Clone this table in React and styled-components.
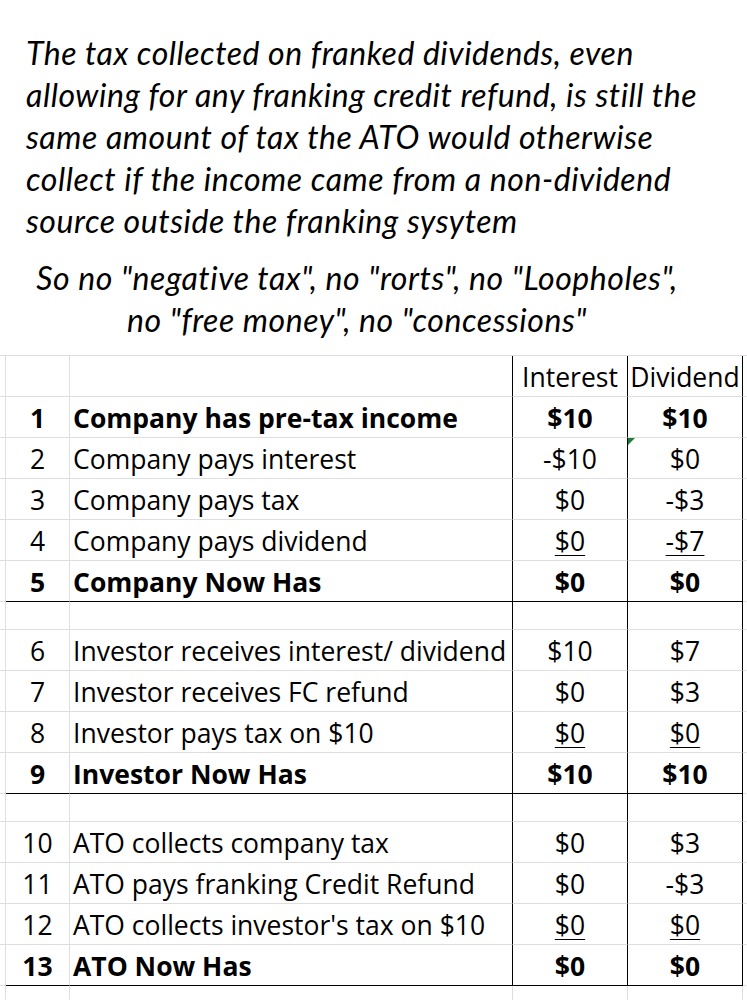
import styled, { createGlobalStyle, css } from "styled-components";

const GlobalStyle = createGlobalStyle`
  body {
    margin: 0;
    background: #fff;
  }
`;

const intro = [
  "The tax collected on franked dividends, even",
  "allowing for any franking credit refund, is still the",
  "same amount of tax the ATO would otherwise",
  "collect if the income came from a non-dividend",
  "source outside the franking sysytem",
];

const slogan = [
  'So no "negative tax", no "rorts", no "Loopholes",',
  'no "free money", no "concessions"',
];

const sections = [
  [
    { n: 1, label: "Company has pre-tax income", a: "$10", b: "$10", bold: true },
    { n: 2, label: "Company pays interest", a: "-$10", b: "$0", flag: true },
    { n: 3, label: "Company pays tax", a: "$0", b: "-$3" },
    { n: 4, label: "Company pays dividend", a: "$0", b: "-$7", under: true },
    { n: 5, label: "Company Now Has", a: "$0", b: "$0", bold: true, total: true },
  ],
  [
    { n: 6, label: "Investor receives interest/ dividend", a: "$10", b: "$7" },
    { n: 7, label: "Investor receives FC refund", a: "$0", b: "$3" },
    { n: 8, label: "Investor pays tax on $10", a: "$0", b: "$0", under: true },
    { n: 9, label: "Investor Now Has", a: "$10", b: "$10", bold: true, total: true },
  ],
  [
    { n: 10, label: "ATO collects company tax", a: "$0", b: "$3" },
    { n: 11, label: "ATO pays franking Credit Refund", a: "$0", b: "-$3" },
    { n: 12, label: "ATO collects investor's tax on $10", a: "$0", b: "$0", under: true },
    { n: 13, label: "ATO Now Has", a: "$0", b: "$0", bold: true, total: true },
  ],
];

const Page = styled.div`
  width: 747px;
  height: 1000px;
  overflow: hidden;
  background: #fff;
`;

const Intro = styled.div`
  height: 355px;
  box-sizing: border-box;
  padding: 32px 0 0 26px;
  font-family: Lato, "Open Sans", sans-serif;
  font-style: italic;
  font-size: 32px;
  letter-spacing: 0.55px;
  line-height: 42px;
  color: #000;
`;

const Para = styled.div`
  width: 662px;
  text-align: ${(p) => (p.$center ? "center" : "left")};
  margin-bottom: 15px;
`;

const Line = styled.div`
  white-space: nowrap;
`;

const Sheet = styled.div`
  border-top: 1px solid #dedede;
  font-family: "Open Sans", "Liberation Sans", sans-serif;
  font-size: 26.5px;
  color: #000;
`;

const Row = styled.div`
  display: grid;
  grid-template-columns: 6px 64px 443px 115px 115px 1fr;
  height: ${(p) => p.$h}px;
`;

const cellBase = css`
  box-sizing: border-box;
  display: flex;
  align-items: center;
  padding-top: 1px;
  white-space: nowrap;
  border-right: 1px solid ${(p) => (p.$rule ? "#000" : "#dedede")};
  border-bottom: 1px solid ${(p) => (p.$total ? "#000" : "#dedede")};
  font-weight: ${(p) => (p.$bold ? 700 : 400)};
`;

const Edge = styled.div`
  ${cellBase}
  border-right-color: ${(p) => (p.$last ? "transparent" : "#dedede")};
`;

const NumCell = styled.div`
  ${cellBase}
  justify-content: center;
`;

const LabelCell = styled.div`
  ${cellBase}
  padding-left: 3px;
`;

const ValueCell = styled.div`
  ${cellBase}
  position: relative;
  justify-content: center;
`;

const Amount = styled.span`
  text-decoration: ${(p) => (p.$under ? "underline" : "none")};
  text-decoration-thickness: 1px;
  text-underline-offset: 4px;
`;

const Flag = styled.span`
  position: absolute;
  top: 0;
  left: 0;
  width: 0;
  height: 0;
  border-top: 7px solid #1f7a3c;
  border-right: 7px solid transparent;
`;

function DataRow({ r }) {
  return (
    <Row $h={41}>
      <Edge />
      <NumCell $bold={r.bold} $total={r.total}>{r.n}</NumCell>
      <LabelCell $bold={r.bold} $total={r.total} $rule>{r.label}</LabelCell>
      <ValueCell $bold={r.bold} $total={r.total} $rule>
        <Amount $under={r.under}>{r.a}</Amount>
      </ValueCell>
      <ValueCell $bold={r.bold} $total={r.total} $rule>
        {r.flag && <Flag />}
        <Amount $under={r.under}>{r.b}</Amount>
      </ValueCell>
      <Edge $last />
    </Row>
  );
}

function BlankRow({ h, ruled = true }) {
  return (
    <Row $h={h}>
      <Edge />
      <NumCell />
      <LabelCell $rule={ruled} />
      <ValueCell $rule={ruled} />
      <ValueCell $rule={ruled} />
      <Edge $last />
    </Row>
  );
}

export default function App() {
  return (
    <Page>
      <GlobalStyle />
      <Intro>
        <Para>
          {intro.map((t) => (
            <Line key={t}>{t}</Line>
          ))}
        </Para>
        <Para $center>
          {slogan.map((t) => (
            <Line key={t}>{t}</Line>
          ))}
        </Para>
      </Intro>
      <Sheet>
        <Row $h={41}>
          <Edge />
          <NumCell />
          <LabelCell $rule />
          <ValueCell $rule>Interest</ValueCell>
          <ValueCell $rule>Dividend</ValueCell>
          <Edge $last />
        </Row>
        {sections.map((rows, i) => (
          <div key={i}>
            {i > 0 && <BlankRow h={28} />}
            {rows.map((r) => (
              <DataRow key={r.n} r={r} />
            ))}
          </div>
        ))}
        <BlankRow h={40} ruled={false} />
      </Sheet>
    </Page>
  );
}
